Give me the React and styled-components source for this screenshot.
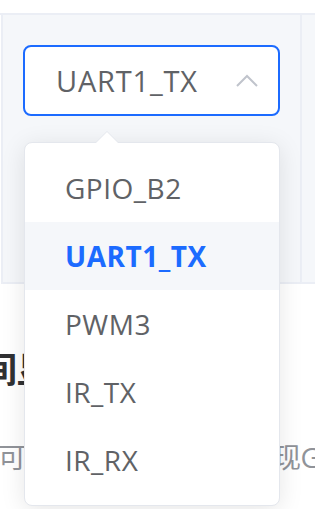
import React from "react";
import styled, { createGlobalStyle } from "styled-components";

const GlobalStyle = createGlobalStyle`
  html, body {
    margin: 0;
    padding: 0;
    background: #ffffff;
    overflow: hidden;
  }
  body {
    font-family: "Open Sans", "Noto Sans CJK SC", sans-serif;
  }
`;

const options = ["GPIO_B2", "UART1_TX", "PWM3", "IR_TX", "IR_RX"];
const selected = "UART1_TX";

const Page = styled.div`
  position: relative;
  width: 315px;
  height: 509px;
  overflow: hidden;
`;

const Table = styled.div`
  display: flex;
  flex-direction: column;
`;

const PrevRow = styled.div`
  height: 13px;
  background: #ffffff;
  border-bottom: 2px solid #ebeef5;
`;

const Row = styled.div`
  display: grid;
  grid-template-columns: 299px 1fr;
  height: 267px;
  background: #f5f7fa;
  border-bottom: 2px solid #ebeef5;
  border-left: 2px solid #ebeef5;
  margin-left: 1px;
`;

const Cell = styled.div`
  padding: 30px 20px 0 20px;
  border-right: ${(p) => (p.$last ? "none" : "2px solid #ebeef5")};
`;

const SelectBox = styled.div`
  position: relative;
  display: flex;
  align-items: center;
  justify-content: space-between;
  height: 71px;
  box-sizing: border-box;
  padding: 0 20px 0 31px;
  background: #ffffff;
  border: 2px solid #1c6bff;
  border-radius: 8px;
  width: 257px;
`;

const SelectText = styled.span`
  font-size: 29px;
  color: #606266;
  letter-spacing: 0.8px;
`;

const Chevron = () => (
  <svg width="22" height="13" viewBox="0 0 22 13" fill="none">
    <path d="M1 12 L11 2 L21 12" stroke="#c0c4cc" strokeWidth="2" />
  </svg>
);

const Dropdown = styled.div`
  position: absolute;
  left: 24px;
  top: 142px;
  width: 256px;
  box-sizing: border-box;
  background: #ffffff;
  border: 1px solid #e4e7ed;
  border-radius: 8px;
  box-shadow: 0 4px 24px 0 rgba(0, 0, 0, 0.1);
  padding: 11px 0;
  z-index: 10;
`;

const Arrow = styled.div`
  position: absolute;
  top: -12px;
  left: 70px;
  width: 0;
  height: 0;
  border-left: 12px solid transparent;
  border-right: 12px solid transparent;
  border-bottom: 12px solid #e4e7ed;

  &::after {
    content: "";
    position: absolute;
    left: -11px;
    top: 1px;
    border-left: 11px solid transparent;
    border-right: 11px solid transparent;
    border-bottom: 11px solid #ffffff;
  }
`;

const Item = styled.div`
  height: 68px;
  line-height: 68px;
  padding: 0 40px;
  font-size: 28px;
  color: ${(p) => (p.$active ? "#1c6bff" : "#606266")};
  font-weight: ${(p) => (p.$active ? 700 : 400)};
  background: ${(p) => (p.$active ? "#f5f7fa" : "transparent")};
  letter-spacing: 0.5px;
`;

const Section = styled.div`
  padding-top: 59px;
`;

const Heading = styled.h3`
  margin: 0 0 0 -55px;
  font-size: 36px;
  line-height: 54px;
  font-weight: 700;
  color: #303133;
  white-space: nowrap;
`;

const Desc = styled.p`
  margin: 39px 0 0 -2px;
  font-size: 28px;
  line-height: 42px;
  color: #909399;
  letter-spacing: -0.5px;
  white-space: nowrap;
`;

export default function App() {
  return (
    <Page>
      <GlobalStyle />
      <Table>
        <PrevRow />
        <Row>
          <Cell>
            <SelectBox>
              <SelectText>{selected}</SelectText>
              <Chevron />
            </SelectBox>
          </Cell>
          <Cell $last />
        </Row>
      </Table>
      <Section>
        <Heading>时间显示设置</Heading>
        <Desc>可根据需要切换引脚实现GPIO功能</Desc>
      </Section>
      <Dropdown>
        <Arrow />
        {options.map((o) => (
          <Item key={o} $active={o === selected}>
            {o}
          </Item>
        ))}
      </Dropdown>
    </Page>
  );
}
